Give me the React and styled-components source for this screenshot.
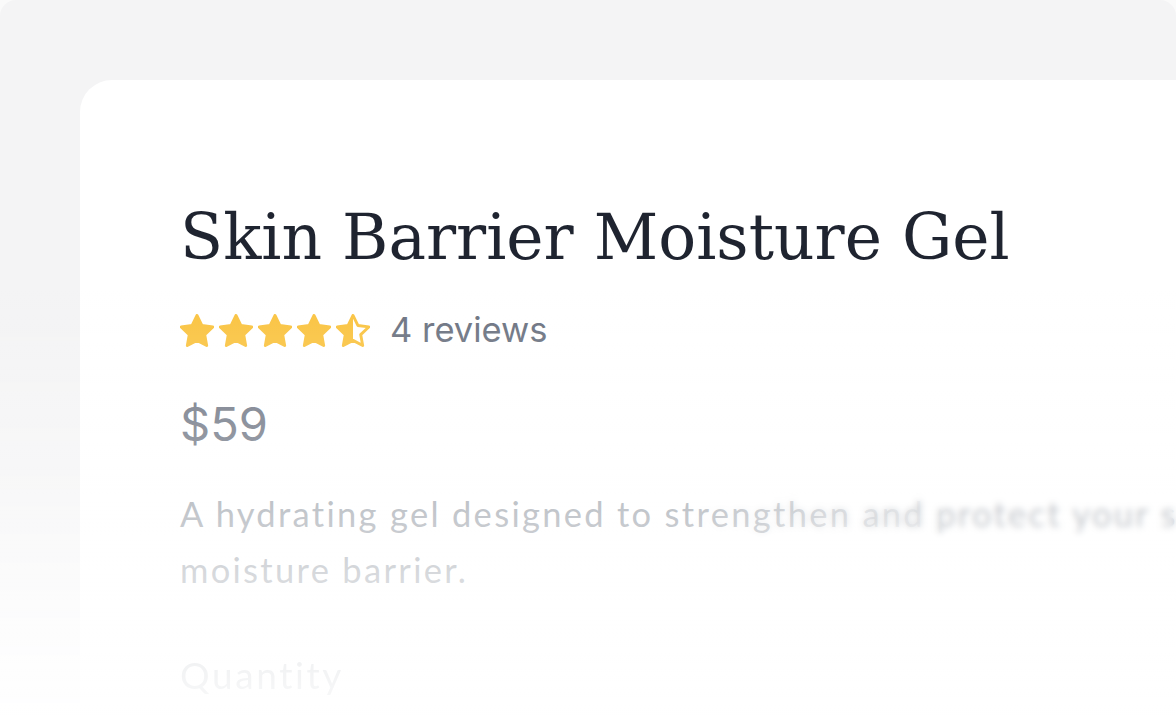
import React from "react";
import styled, { createGlobalStyle } from "styled-components";

const Global = createGlobalStyle`
  html, body { margin: 0; padding: 0; background: #fafafa; }
  #root { width: 1176px; height: 720px; overflow: hidden; }
`;

const Frame = styled.div`
  position: relative;
  width: 1176px;
  height: 720px;
  box-sizing: border-box;
  padding: 80px 0 0 80px;
  background: #f4f4f5;
  border-radius: 16px 16px 0 0;
  overflow: hidden;
`;

const Card = styled.section`
  position: relative;
  height: 100%;
  box-sizing: border-box;
  background: #ffffff;
  border-radius: 32px 0 0 0;
  padding: 122px 0 0 100px;
  display: flex;
  flex-direction: column;
  white-space: nowrap;
`;

const Title = styled.h1`
  margin: 0;
  font-family: "DejaVu Serif", "Liberation Serif", serif;
  font-weight: 400;
  font-size: 63px;
  line-height: 72px;
  letter-spacing: 0;
  color: #1f2430;
`;

const RatingRow = styled.div`
  display: flex;
  align-items: center;
  gap: 20px;
  margin-top: 36px;
`;

const Stars = styled.div`
  display: flex;
  gap: 5px;
`;

const Reviews = styled.span`
  font-family: Inter, "Liberation Sans", sans-serif;
  font-size: 34.5px;
  line-height: 40px;
  color: #6b7280;
`;

const Price = styled.div`
  margin-top: 46px;
  font-family: Inter, "Liberation Sans", sans-serif;
  font-size: 47px;
  line-height: 56px;
  color: #6b7280;
`;

const Description = styled.p`
  margin: 34px 0 0;
  font-family: Lato, "Liberation Sans", sans-serif;
  font-size: 34.5px;
  line-height: 56px;
  letter-spacing: 2.3px;
  color: #959ba4;
  white-space: normal;
  width: 1200px;
`;

const Label = styled.div`
  margin-top: 54px;
  font-family: Lato, "Liberation Sans", sans-serif;
  font-size: 37px;
  letter-spacing: 2.6px;
  color: #a3a9b1;
  filter: blur(0.6px);
`;

const SideBlur = styled.div`
  position: absolute;
  left: 600px;
  right: 0;
  top: 410px;
  height: 100px;
  backdrop-filter: blur(3px);
  -webkit-mask-image: linear-gradient(to right, transparent 0%, #000 55%);
  mask-image: linear-gradient(to right, transparent 0%, #000 55%);
`;

const Fade = styled.div`
  position: absolute;
  left: 0;
  right: 0;
  bottom: 0;
  height: 430px;
  pointer-events: none;
  background: linear-gradient(
    to bottom,
    rgba(255, 255, 255, 0) 0%,
    rgba(255, 255, 255, 0.35) 45%,
    rgba(255, 255, 255, 0.8) 80%,
    rgba(255, 255, 255, 0.95) 100%
  );
`;

const STAR =
  "M12 2.6l2.7 5.6 6.1.8-4.5 4.3 1.1 6.1L12 16.5l-5.4 2.9 1.1-6.1-4.5-4.3 6.1-.8z";

function Star({ kind }) {
  const id = "half-star";
  return (
    <svg width="34" height="33" viewBox="2.8 1.8 18.4 18.4">
      {kind === "half" && (
        <defs>
          <linearGradient id={id} x1="0" x2="1" y1="0" y2="0">
            <stop offset="50%" stopColor="#fac33f" />
            <stop offset="50%" stopColor="#ffffff" />
          </linearGradient>
        </defs>
      )}
      <path
        d={STAR}
        fill={kind === "half" ? `url(#${id})` : "#fac33f"}
        stroke="#fac33f"
        strokeWidth="1.6"
        strokeLinejoin="round"
      />
    </svg>
  );
}

export default function App() {
  return (
    <>
      <Global />
      <Frame>
        <Card>
          <Title>Skin Barrier Moisture Gel</Title>
          <RatingRow>
            <Stars>
              <Star kind="full" />
              <Star kind="full" />
              <Star kind="full" />
              <Star kind="full" />
              <Star kind="half" />
            </Stars>
            <Reviews>4 reviews</Reviews>
          </RatingRow>
          <Price>$59</Price>
          <Description>
            A hydrating gel designed to strengthen and protect your skin's
            moisture barrier.
          </Description>
          <Label>Quantity</Label>
          <SideBlur />
        </Card>
        <Fade />
      </Frame>
    </>
  );
}
